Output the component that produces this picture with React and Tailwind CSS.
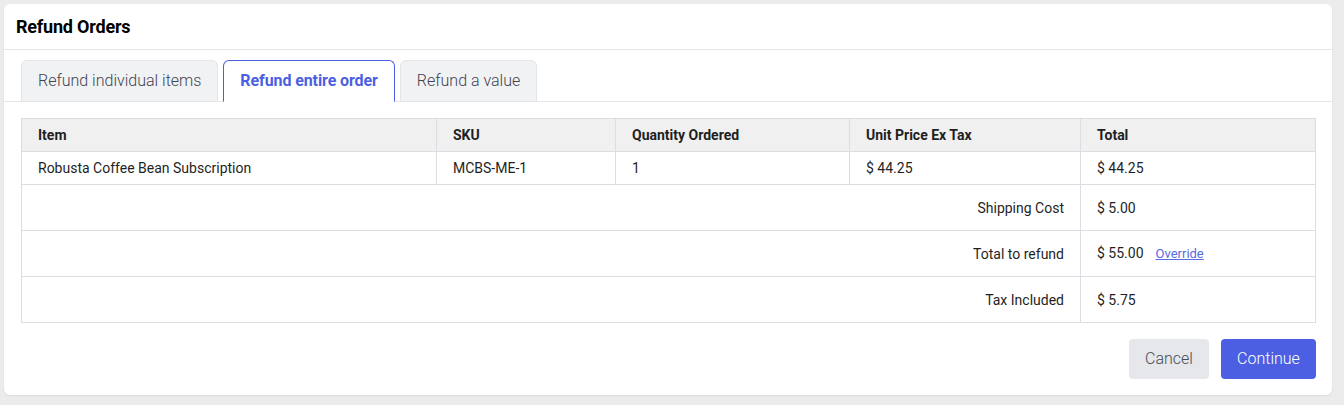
import React, { useState } from 'react';

const tabs = [
  { id: 'items', label: 'Refund individual items' },
  { id: 'order', label: 'Refund entire order' },
  { id: 'value', label: 'Refund a value' },
];

const columns = [
  { label: 'Item', width: 'w-[415px]' },
  { label: 'SKU', width: 'w-[179px]' },
  { label: 'Quantity Ordered', width: 'w-[234px]' },
  { label: 'Unit Price Ex Tax', width: 'w-[231px]' },
  { label: 'Total', width: '' },
];

const summary = [
  { label: 'Shipping Cost', value: '$ 5.00' },
  { label: 'Total to refund', value: '$ 55.00', override: true },
  { label: 'Tax Included', value: '$ 5.75' },
];

export default function App() {
  const [active, setActive] = useState('order');

  return (
    <div className="min-h-[405px] bg-[#ececec] pt-1 pl-1 font-['Roboto',sans-serif] text-[#1f1f1f]">
      <div className="w-[1328px] h-[391px] bg-white rounded-md shadow-[0_1px_2px_rgba(0,0,0,0.08)] flex flex-col">
        {/* Header */}
        <div className="h-[46px] border-b border-[#e6e6e8] px-3 flex items-center">
          <h1 className="text-lg font-bold text-black tracking-[-0.2px]">Refund Orders</h1>
        </div>

        {/* Tabs */}
        <div className="pt-[10px] pl-[17px] flex gap-[5px] relative z-10">
          {tabs.map((tab) => {
            const isActive = tab.id === active;
            return (
              <button
                key={tab.id}
                onClick={() => setActive(tab.id)}
                className={`h-[42px] -mb-px px-4 rounded-t-md border text-base ${
                  isActive
                    ? 'bg-white border-[#4c5fe2] border-b-white font-bold text-[#4c5fe2] tracking-[-0.1px]'
                    : 'bg-[#f1f2f4] border-[#e4e5e8] border-b-[#e4e5e8] font-light text-[#3f4450]'
                }`}
              >
                {tab.label}
              </button>
            );
          })}
        </div>

        {/* Panel */}
        <div className="flex-1 border-t border-[#e6e6e8] pt-4 pl-[17px] pr-4 pb-4 flex flex-col">
          <table className="w-[1295px] border-collapse table-fixed text-sm">
            <thead>
              <tr className="bg-[#f0f0f0] h-[33px]">
                {columns.map((col) => (
                  <th
                    key={col.label}
                    className={`${col.width} border border-[#dcdde3] px-4 text-left font-bold text-[#1f1f1f]`}
                  >
                    {col.label}
                  </th>
                ))}
              </tr>
            </thead>
            <tbody>
              <tr className="h-[33px]">
                <td className="border border-[#dcdde3] px-4">Robusta Coffee Bean Subscription</td>
                <td className="border border-[#dcdde3] px-4">MCBS-ME-1</td>
                <td className="border border-[#dcdde3] px-4">1</td>
                <td className="border border-[#dcdde3] px-4">$ 44.25</td>
                <td className="border border-[#dcdde3] px-4">$ 44.25</td>
              </tr>
              {summary.map((row) => (
                <tr key={row.label} className="h-[46px]">
                  <td colSpan={4} className="border border-[#dcdde3] px-4 text-right">
                    {row.label}
                  </td>
                  <td className="border border-[#dcdde3] px-4">
                    {row.value}
                    {row.override && (
                      <a href="#" className="ml-3 text-[13px] text-[#5a6ae0] underline">
                        Override
                      </a>
                    )}
                  </td>
                </tr>
              ))}
            </tbody>
          </table>

          <div className="mt-auto flex justify-end gap-3">
            <button className="h-10 w-20 rounded bg-[#e5e7eb] text-base font-light text-[#454a55]">
              Cancel
            </button>
            <button className="h-10 w-[95px] rounded bg-[#4c5fe2] text-base font-light text-white">
              Continue
            </button>
          </div>
        </div>
      </div>
    </div>
  );
}
